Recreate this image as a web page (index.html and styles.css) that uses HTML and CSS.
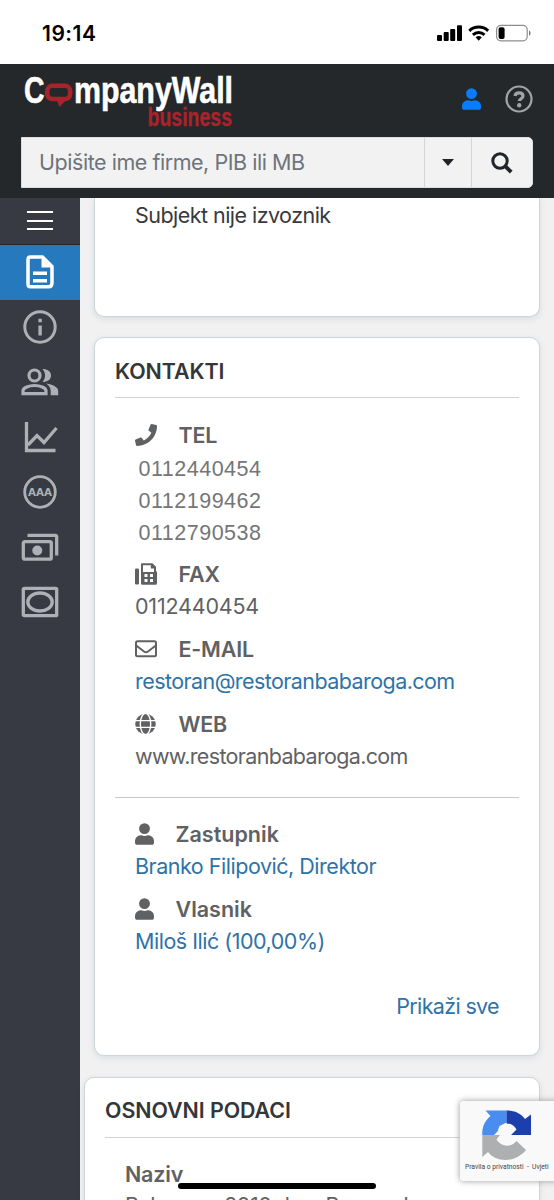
FILE: index.html
```html
<!DOCTYPE html>
<html lang="sr-Latn">
<head>
<meta charset="utf-8">
<title>CompanyWall business</title>
<link rel="stylesheet" href="styles.css">
</head>
<body>
<div class="screen">
  <div class="status">
    <span class="time">19:14</span>
    <svg class="status-icons" viewBox="0 0 96 18" width="96" height="18">
      <rect x="1" y="11" width="5" height="6" rx="1"/><rect x="7.7" y="8" width="5" height="9" rx="1"/><rect x="14.2" y="5" width="5" height="12" rx="1"/><rect x="21" y="1.3" width="5" height="15.7" rx="1"/>
      <g fill="none" stroke="#000" stroke-width="3"><path d="M33.3 6.8a13.7 13.7 0 0 1 18.8 0"/><path d="M36.9 10.8a8.6 8.6 0 0 1 11.6 0"/></g>
      <path d="M39.6 13.2a4.8 4.8 0 0 1 6.2 0L42.7 16.7z"/>
      <rect x="60.6" y="1.3" width="30.6" height="15.6" rx="4.3" fill="none" stroke="#8d8d8d" stroke-width="1.2"/>
      <rect x="62.6" y="3.3" width="6" height="11.6" rx="2"/><path d="M93 6.5c2 .8 2 4.5 0 5.3z" fill="#777"/>
    </svg>
  </div>
  <header class="header">
    <div class="brand">
      <svg class="logo" viewBox="0 0 214 58" width="214" height="58">
        <text class="logo-white" x="1" y="30" textLength="20.5" lengthAdjust="spacingAndGlyphs">C</text>
        <rect x="24.3" y="12.8" width="22.8" height="13.2" rx="5" fill="none" stroke="#a9232a" stroke-width="4.6"/>
        <path d="M34 27h9l-6.500 7z" fill="#a9232a"/>
        <text class="logo-white" x="51" y="30" textLength="159" lengthAdjust="spacingAndGlyphs">mpanyWall</text>
        <text class="logo-red" x="124.5" y="52.5" textLength="84.5" lengthAdjust="spacingAndGlyphs">business</text>
      </svg>
      <div class="tools">
        <svg viewBox="0 0 448 512" width="19" height="22" fill="#087cfa"><path d="M224 256a128 128 0 1 0 0-256 128 128 0 0 0 0 256zm90 32h-17a174 174 0 0 1-146 0h-17A134 134 0 0 0 0 422v42c0 27 21 48 48 48h352c27 0 48-21 48-48v-42A134 134 0 0 0 314 288z"/></svg>
        <svg viewBox="0 0 28 28" width="28" height="28" fill="none" stroke="#a1a3a5"><circle cx="14" cy="14" r="12.5" stroke-width="2.2"/><path d="M10 10.900C10.600 6.900 18 6.800 18 11c0 3-3.700 2.700-3.700 5" stroke-width="3.2"/><circle cx="14.2" cy="20.2" r="2.2" fill="#a1a3a5" stroke="none"/></svg>
      </div>
    </div>
    <div class="search">
      <span class="placeholder">Upišite ime firme, PIB ili MB</span>
      <span class="drop"><i class="caret"></i></span>
      <span class="go"><svg viewBox="0 0 22 22" width="22" height="22" fill="none" stroke="#212529" stroke-width="3"><circle cx="9" cy="9" r="7.2"/><path d="M14.200 14.200l6 6" stroke-width="4"/></svg></span>
    </div>
  </header>
  <div class="body">
    <nav class="side">
      <div class="item menu"><i></i><i></i><i></i></div>
      <div class="item active"><svg viewBox="0 0 28 34" width="28" height="34"><path d="M4.500 2h12l9.500 9.500V28q0 3.800-3.500 3.800h-18Q2 31.800 2 29V4.500Q2 2 4.500 2z" fill="none" stroke="#fff" stroke-width="3.5"/><path d="M15.500 2v10.500H26zM7 16.500h14v3.500H7zm0 7.500h14v3.500H7z" fill="#fff"/></svg></div>
      <div class="item"><svg viewBox="0 0 34 34" width="34" height="34" fill="#adb1b5"><circle cx="17" cy="17" r="15.2" fill="none" stroke="#adb1b5" stroke-width="3"/><path d="M15.400 15.500h3.400v10h-3.400zM15.400 8.800h3.400v3.400h-3.400z"/></svg></div>
      <div class="item"><svg viewBox="0 0 38 28" width="38" height="28" fill="#adb1b5"><g fill="none" stroke="#adb1b5" stroke-width="3.2"><circle cx="13.5" cy="7.5" r="5.5"/><path d="M2 25.700v-3c0-3 6-5.200 11.500-5.200S25 19.700 25 22.700v3z"/></g><path d="M21.500 1c5 0 8.500 2.200 8.500 6.500s-3.500 6.500-8.500 6.500c3.500-4 3.500-9 0-13zM25 15.500c7 1 12.200 3.500 12.200 7.500v4.300h-7.500V23q0-4.500-4.700-7.500z"/></svg></div>
      <div class="item"><svg viewBox="0 0 34 32" width="34" height="32" fill="none" stroke="#adb1b5" stroke-width="3.3"><path d="M3.500 1v28.500h29M5 24l9-9.500 7 7L33.500 7"/></svg></div>
      <div class="item"><svg viewBox="0 0 34 34" width="34" height="34"><circle cx="17" cy="17" r="15.3" fill="none" stroke="#adb1b5" stroke-width="2.8"/><text class="aaa" x="5" y="20.8" textLength="24" lengthAdjust="spacingAndGlyphs">AAA</text></svg></div>
      <div class="item"><svg viewBox="0 0 38 28" width="38" height="28" fill="none" stroke="#adb1b5" stroke-width="3.3"><rect x="2.3" y="8.7" width="28" height="17.5" rx="1.5"/><path d="M6.500 2.300H34q1.700 0 1.700 1.700v18.500"/><circle cx="16.3" cy="17.5" r="5" fill="#adb1b5" stroke="none"/></svg></div>
      <div class="item"><svg viewBox="0 0 38 32" width="38" height="32" fill="none" stroke="#adb1b5" stroke-width="3.3"><rect x="2.3" y="2.3" width="33.4" height="27.4" rx="1"/><ellipse cx="19" cy="16" rx="12.2" ry="9"/></svg></div>
    </nav>
    <main class="main">
      <section class="card first"><p class="dark">Subjekt nije izvoznik</p></section>
      <section class="card contacts">
        <h2>KONTAKTI</h2>
        <div class="details">
          <div class="group">
            <h3><svg viewBox="0 0 512 512" width="22" height="22"><path d="M493 24.600l-104-24a24 24 0 0 0-27 14l-48 112a24 24 0 0 0 7 28l60 49.600A371 371 0 0 1 204 381.800l-49.600-60.600a24 24 0 0 0-28-7l-112 48a24 24 0 0 0-14 28l24 104A24 24 0 0 0 48 512c256 0 464-207.500 464-464 0-11-8-21-19-23.400z"/></svg>TEL</h3>
            <div class="phones"><p>0112440454</p><p>0112199462</p><p>0112790538</p></div>
          </div>
          <div class="group">
            <h3><svg viewBox="0 0 22 22" width="22" height="22"><rect x="0" y="5.5" width="4" height="16" rx="1.3"/><path fill-rule="evenodd" d="M7 .3h10.500l3.500 3.500V8q1 .3 1 1.500v10.700q0 1.500-1.500 1.500h-13q-1.500 0-1.500-1.500V1.500Q6 .3 7 .3zM8 2.200V9h11V5.500h-3.200V2.200zM9.500 11v3h3v-3zm5.500 0v3h3v-3zm-5.500 5v3h3v-3zm5.500 0v3h3v-3z"/></svg>FAX</h3>
            <p class="fax">0112440454</p>
          </div>
          <div class="group">
            <h3><svg class="outline" viewBox="0 0 22 22" width="22" height="22"><rect x="1" y="3.2" width="20" height="15" rx="1.5"/><path d="M1.200 7.500l7.800 6q2 1.500 4 0l7.800-6"/></svg>E-MAIL</h3>
            <p class="email"><a>restoran@restoranbabaroga.com</a></p>
          </div>
          <div class="group">
            <h3><svg viewBox="0 0 22 22" width="22" height="22"><circle cx="10.5" cy="11" r="10.3"/><path d="M0 7.600h21M0 14.400h21" stroke="#fff" stroke-width="1.4"/><ellipse cx="10.5" cy="11" rx="5.2" ry="10.8" fill="none" stroke="#fff" stroke-width="1.4"/></svg>WEB</h3>
            <p class="web">www.restoranbabaroga.com</p>
          </div>
        </div>
        <div class="details people">
          <div class="group">
            <h3><svg viewBox="0 0 448 512" width="19" height="22"><path d="M224 256a128 128 0 1 0 0-256 128 128 0 0 0 0 256zm90 32h-17a174 174 0 0 1-146 0h-17A134 134 0 0 0 0 422v42c0 27 21 48 48 48h352c27 0 48-21 48-48v-42A134 134 0 0 0 314 288z"/></svg>Zastupnik</h3>
            <p><a>Branko Filipović, Direktor</a></p>
          </div>
          <div class="group">
            <h3><svg viewBox="0 0 448 512" width="19" height="22"><path d="M224 256a128 128 0 1 0 0-256 128 128 0 0 0 0 256zm90 32h-17a174 174 0 0 1-146 0h-17A134 134 0 0 0 0 422v42c0 27 21 48 48 48h352c27 0 48-21 48-48v-42A134 134 0 0 0 314 288z"/></svg>Vlasnik</h3>
            <p><a>Miloš Ilić (100,00%)</a></p>
          </div>
          <p class="more"><a>Prikaži sve</a></p>
        </div>
      </section>
      <section class="card basic">
        <h2>OSNOVNI PODACI</h2>
        <div class="details">
          <h3>Naziv</h3>
          <p>Babaroga 2010 doo, Beograd</p>
        </div>
      </section>
    </main>
  </div>
  <aside class="captcha">
    <svg viewBox="0 0 50 50" width="50" height="50">
      <path d="M24.500.5v12L17.500 16l-2 5.500-3.500 3.500H.3C0 17.500 2 11.500 8.500 6L3.500.5z" fill="#4a8df0"/>
      <path d="M24.500.5C32 .5 38.500 3 43 9l6-4.500V25H29l5.500-5.500q-3.500-6-10-6z" fill="#1d3fae"/>
      <path d="M.3 25H18l-3.500 4.500C20 38 30 37 34.500 31L44 40C33 53.500 14 52.500 6 42L.3 47z" fill="#aeafb0"/>
    </svg>
    <span>Pravila o privatnosti&nbsp; - &nbsp;Uvjeti</span>
  </aside>
  <div class="home-bar"></div>
</div>
</body>
</html>
```
FILE: styles.css
```css
* { box-sizing: border-box; margin: 0; padding: 0; }
body { font-family: Inter, "Liberation Sans", sans-serif; }
.screen { position: relative; width: 554px; height: 1200px; overflow: hidden; display: flex; flex-direction: column; background: #f1f1f2; }
svg { display: block; flex: none; overflow: visible; }

.status { flex: none; height: 64px; background: #fff; display: flex; justify-content: space-between; padding: 22px 22px 0 42px; }
.time { font-size: 21px; line-height: 24px; font-weight: 600; letter-spacing: 0.5px; }
.status-icons { margin-top: 2px; }

.header { flex: none; height: 134px; background: #25282b; padding: 9px 21px 0; }
.brand { height: 64px; display: flex; justify-content: space-between; }
.logo { margin-left: 2px; }
.logo-white { font: bold 36px "Liberation Sans", sans-serif; fill: #fff; stroke: #fff; stroke-width: .6px; }
.logo-red { font: bold 25px "Liberation Sans", sans-serif; fill: #a9232a; stroke: #a9232a; stroke-width: .4px; }
.tools { display: flex; align-items: center; gap: 24.5px; height: 52px; }
.search { height: 51px; display: flex; background: #f2f2f2; border: 1px solid #dcdfe2; border-radius: 0 5px 5px 0; }
.placeholder { width: 402px; padding-left: 17px; line-height: 49px; font-size: 21.5px; color: #6d747b; white-space: nowrap; letter-spacing: -0.46px; }
.drop, .go { display: flex; align-items: center; justify-content: center; border-left: 1px solid #d5d5d6; }
.drop { width: 47px; }
.go { flex: 1; }
.caret { border: 6.5px solid transparent; border-top: 7px solid #212529; border-bottom: 0; }

.body { flex: 1; display: flex; min-height: 0; }
.side { width: 80px; background: #373a42; }
.item { height: 55px; display: flex; align-items: center; justify-content: center; padding-bottom: 1px; }
.menu { height: 47px; flex-direction: column; gap: 6.5px; border-bottom: 1px solid #24272c; }
.menu i { width: 26px; height: 2px; background: #fff; }
.active { background: #2579bc; }
.aaa { font: bold 10px "DejaVu Sans", sans-serif; fill: #adb1b5; }

.main { flex: 1; padding: 0 14px 0 4px; }
.card { margin-left: 10px; background: #fff; border: 1px solid #ccd5d8; border-radius: 10px; box-shadow: 0 2px 6px rgba(60, 80, 100, .13); padding: 0 20px; }
.first { height: 119px; border-top: 0; border-radius: 0 0 10px 10px; padding: 1px 40px; }
.contacts { height: 719px; margin-top: 20px; }
.basic { height: 200px; margin: 21px 0 0; }
h2 { height: 60px; padding-top: 17px; border-bottom: 1px solid #cfd3d6; font-size: 21.4px; line-height: 32px; font-weight: 600; color: #343639; letter-spacing: -0.05px; }
.basic h2 { padding-top: 16px; }
.details { padding: 20.5px 20px 0; font-size: 21.5px; line-height: 32.3px; color: #606163; }
.group { margin-bottom: 10.3px; }
h3 { display: flex; align-items: center; gap: 21.5px; font-size: 21.5px; line-height: 32.3px; font-weight: 600; color: #606163; letter-spacing: -0.2px; }
h3 svg { fill: #606163; }
h3 .outline { fill: none; stroke: #606163; stroke-width: 2px; }
.dark { font-size: 21.5px; line-height: 32.3px; color: #37393c; letter-spacing: -0.54px; }
p { white-space: nowrap; }
.details p { letter-spacing: -0.48px; }
.details .fax { letter-spacing: -0.2px; }
.details .email { letter-spacing: -0.57px; }
.details .web { letter-spacing: -0.66px; }
.phones { padding: 2px 0 0 3.5px; margin-bottom: -2px; font-family: "Liberation Sans", sans-serif; color: #747577; }
.details .phones p { letter-spacing: 0.5px; }
a { color: #2e73a8; }
.people { margin: 13.6px 0 0; border-top: 1px solid #c6c9cb; padding: 20.5px 20px 0; }
.people h3 { letter-spacing: 0; }
.contacts .details:not(.people) { padding-bottom: 0.3px; }
.details .more { text-align: right; padding-top: 22px; letter-spacing: -0.65px; }
.basic .details { padding-top: 20px; }
.basic .details p { line-height: 30px; }

.captcha { position: absolute; left: 460px; top: 1101px; width: 100px; height: 80px; border-radius: 3px; background: #f9f9f9; box-shadow: 0 0 6px #999; }
.captcha svg { margin: 8.5px 0 0 22px; }
.captcha span { display: block; margin: 3px 0 0 5px; font: 6.7px/9px Roboto, sans-serif; color: #444; white-space: nowrap; }
.home-bar { position: absolute; left: 178px; top: 1183px; width: 198px; height: 6px; border-radius: 3px; background: #000; }
```
